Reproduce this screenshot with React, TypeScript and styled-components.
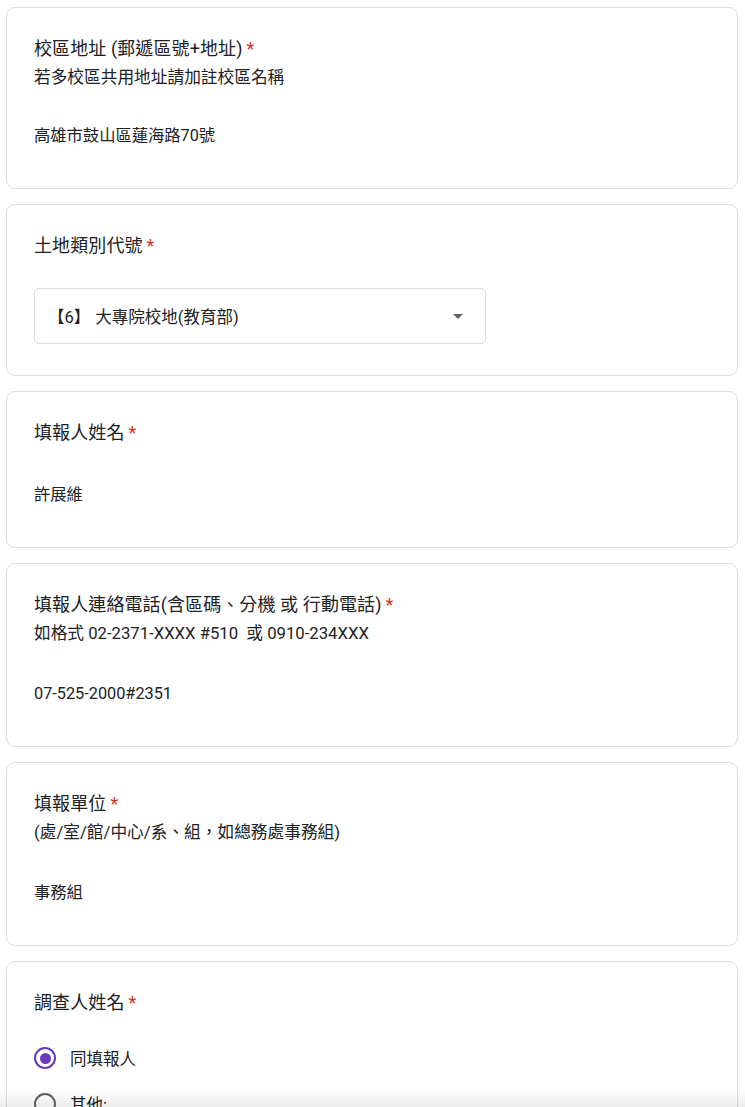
import React from "react";
import styled, { createGlobalStyle } from "styled-components";

const Global = createGlobalStyle`
  html, body { margin: 0; padding: 0; background: #ffffff; }
  body { font-family: Roboto, "Noto Sans CJK TC", Arial, sans-serif; color: #202124; }
`;

const Page = styled.div`
  display: flex;
  flex-direction: column;
  gap: 15px;
  padding: 7px 7px 40px 6px;
`;

const Card = styled.section`
  border: 1px solid #dadce0;
  border-radius: 9px;
  background: #fff;
  padding: 27px 28px 27px 27px;
  display: flex;
  flex-direction: column;
`;

const Line = styled.div`
  height: 27px;
  line-height: 27px;
  white-space: pre;
  color: #202124;
`;

const Title = styled(Line)`
  font-size: 18px;
  letter-spacing: 0.1px;
`;

const Star = styled.span`
  color: #d93025;
  margin-left: 4px;
`;

const Desc = styled(Line)`
  font-size: 16.7px;
  margin-top: 2px;
`;

const Answer = styled(Line)<{ $gap: number }>`
  font-size: 16.3px;
  margin-top: ${(p) => p.$gap}px;
  margin-bottom: 12px;
`;

const Select = styled.div`
  margin-top: 29px;
  margin-bottom: 4px;
  width: 452px;
  height: 56px;
  box-sizing: border-box;
  border: 1px solid #dadce0;
  border-radius: 5px;
  display: flex;
  align-items: center;
  justify-content: space-between;
  padding: 0 22px 0 13px;
  font-size: 16.5px;
  color: #202124;
`;

const Code = styled.span`
  margin-right: 5px;
`;

const Caret = styled.span`
  width: 0;
  height: 0;
  border-left: 5.5px solid transparent;
  border-right: 5.5px solid transparent;
  border-top: 5.5px solid #5f6368;
`;

const Options = styled.div`
  margin-top: 19px;
  display: flex;
  flex-direction: column;
`;

const OptionRow = styled.label`
  height: 46px;
  display: flex;
  align-items: center;
  gap: 14px;
  font-size: 16.5px;
  color: #202124;
`;

const Radio = styled.span<{ $on?: boolean }>`
  width: 22px;
  height: 22px;
  box-sizing: border-box;
  border-radius: 50%;
  border: 2.3px solid ${(p) => (p.$on ? "#673ab7" : "#5f6368")};
  display: flex;
  align-items: center;
  justify-content: center;
  &::after {
    content: "";
    display: ${(p) => (p.$on ? "block" : "none")};
    width: 11px;
    height: 11px;
    border-radius: 50%;
    background: #673ab7;
  }
`;

const BottomFade = styled.div`
  position: fixed;
  left: 0;
  right: 0;
  bottom: 0;
  height: 18px;
  background: linear-gradient(to bottom, rgba(0, 0, 0, 0), rgba(0, 0, 0, 0.07));
  pointer-events: none;
`;

type Q = { title: string; desc?: string; answer: string; gap: number };

const TextCard = ({ title, desc, answer, gap }: Q) => (
  <Card>
    <Title>
      {title}
      <Star>*</Star>
    </Title>
    {desc && <Desc>{desc}</Desc>}
    <Answer $gap={gap}>{answer}</Answer>
  </Card>
);

export default function App() {
  return (
    <>
      <Global />
      <Page>
        <TextCard
          title="校區地址 (郵遞區號+地址)"
          desc="若多校區共用地址請加註校區名稱"
          answer="高雄市鼓山區蓮海路70號"
          gap={31}
        />
        <Card>
          <Title>
            土地類別代號<Star>*</Star>
          </Title>
          <Select>
            <span>
              <Code>【6】</Code>大專院校地(教育部)
            </span>
            <Caret />
          </Select>
        </Card>
        <TextCard title="填報人姓名" answer="許展維" gap={35} />
        <TextCard
          title="填報人連絡電話(含區碼、分機 或 行動電話)"
          desc="如格式 02-2371-XXXX #510  或 0910-234XXX"
          answer="07-525-2000#2351"
          gap={33}
        />
        <TextCard
          title="填報單位"
          desc="(處/室/館/中心/系、組，如總務處事務組)"
          answer="事務組"
          gap={33}
        />
        <Card>
          <Title>
            調查人姓名<Star>*</Star>
          </Title>
          <Options>
            <OptionRow>
              <Radio $on />
              同填報人
            </OptionRow>
            <OptionRow>
              <Radio />
              其他:
            </OptionRow>
          </Options>
        </Card>
      </Page>
      <BottomFade />
    </>
  );
}
